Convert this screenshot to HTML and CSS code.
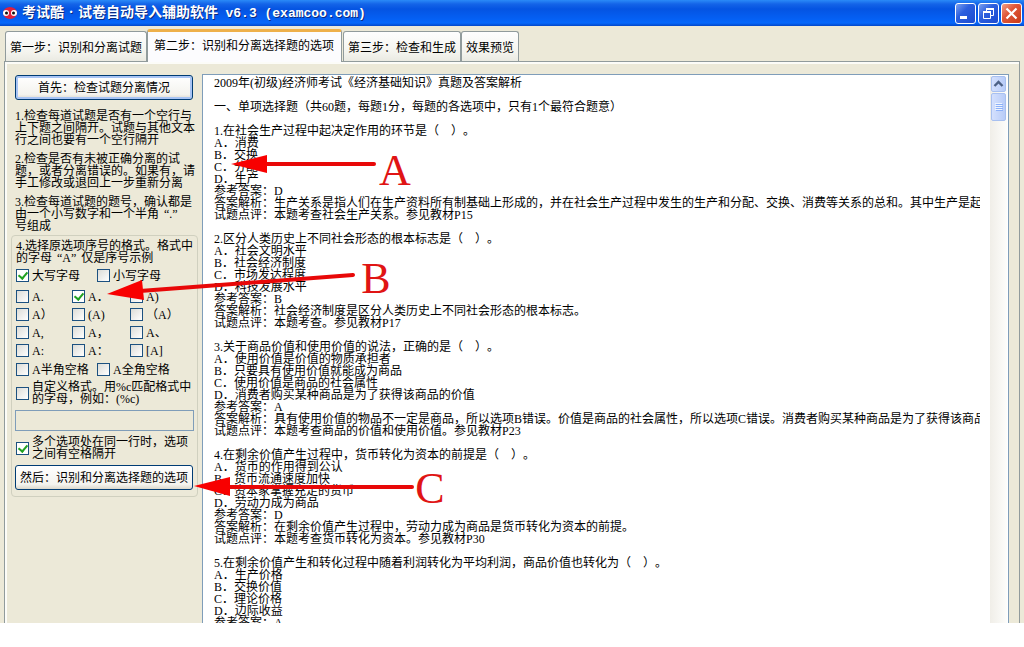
FILE: index.html
```html
<!DOCTYPE html>
<html lang="zh-CN">
<head>
<meta charset="utf-8">
<title>考试酷·试卷自动导入辅助软件</title>
<link rel="stylesheet" href="styles.css">
</head>
<body>
<div class="window">
  <header class="titlebar">
    <svg class="logo" width="16" height="16" viewBox="0 0 16 16" aria-hidden="true">
      <ellipse cx="8" cy="8" rx="7" ry="6" fill="#e0203c"/>
      <circle cx="4" cy="8" r="3" fill="#fff"/><circle cx="12" cy="8" r="3" fill="#fff"/>
      <circle cx="4.500" cy="8" r="1.500" fill="#111"/><circle cx="11.500" cy="8" r="1.500" fill="#111"/>
    </svg>
    <h1 class="title">考试酷<span class="title-dot">·</span>试卷自动导入辅助软件 <span class="title-latin">v6.3 (examcoo.com)</span></h1>
    <div class="window-buttons">
      <button class="win-btn" type="button" aria-label="最小化"><svg width="19" height="19" viewBox="0 0 19 19"><path d="M4 12h7v3H4z" fill="#fff"/></svg></button>
      <button class="win-btn" type="button" aria-label="还原"><svg width="19" height="19" viewBox="0 0 19 19"><path d="M7.500 7V4.500h7v7H12M4.500 7.500h7v7h-7z" fill="none" stroke="#fff"/><path d="M7 4h8v2H7zM4 7h8v2H4z" fill="#fff"/></svg></button>
      <button class="win-btn win-close" type="button" aria-label="关闭"><svg width="19" height="19" viewBox="0 0 19 19"><path d="M4.500 4.500l10 10M14.500 4.500l-10 10" stroke="#fff" stroke-width="2.200"/></svg></button>
    </div>
  </header>

  <nav class="tabs" role="tablist">
    <button class="tab" role="tab" type="button">第一步：识别和分离试题</button>
    <button class="tab tab-active" role="tab" type="button" aria-selected="true">第二步：识别和分离选择题的选项</button>
    <button class="tab tab-spaced" role="tab" type="button">第三步：检查和生成</button>
    <button class="tab" role="tab" type="button">效果预览</button>
  </nav>

  <main class="panel">
    <aside class="sidebar">
      <button class="push push-default" type="button">首先：检查试题分离情况</button>
      <div class="notes">
        <p>1.检查每道试题是否有一个空行与<br>上下题之间隔开。试题与其他文本<br>行之间也要有一个空行隔开</p>
        <p>2.检查是否有未被正确分离的试<br>题，或者分离错误的。如果有，请<br>手工修改或退回上一步重新分离</p>
        <p>3.检查每道试题的题号，确认都是<br>由一个小写数字和一个半角<span class="quoted">“.”</span><br>号组成</p>
      </div>
      <section class="group">
        <p>4.选择原选项序号的格式。格式中<br>的字母<span class="quoted">“A”</span>仅是序号示例</p>
        <div class="pair">
          <label class="check"><input type="checkbox" checked>大写字母</label>
          <label class="check"><input type="checkbox">小写字母</label>
        </div>
        <div class="formats">
          <label class="check"><input type="checkbox">A.</label>
          <label class="check"><input type="checkbox" checked>A．</label>
          <label class="check"><input type="checkbox">A)</label>
          <label class="check"><input type="checkbox">A）</label>
          <label class="check"><input type="checkbox">(A)</label>
          <label class="check"><input type="checkbox">（A）</label>
          <label class="check"><input type="checkbox">A,</label>
          <label class="check"><input type="checkbox">A，</label>
          <label class="check"><input type="checkbox">A、</label>
          <label class="check"><input type="checkbox">A:</label>
          <label class="check"><input type="checkbox">A：</label>
          <label class="check"><input type="checkbox">[A]</label>
        </div>
        <div class="pair">
          <label class="check"><input type="checkbox">A半角空格</label>
          <label class="check"><input type="checkbox">A全角空格</label>
        </div>
        <label class="check check-tall"><input type="checkbox"><span>自定义格式。用%c匹配格式中<br>的字母，例如：(%c)</span></label>
        <input class="custom" type="text" aria-label="自定义格式">
        <label class="check check-tall"><input type="checkbox" checked><span>多个选项处在同一行时，选项<br>之间有空格隔开</span></label>
        <button class="push" type="button">然后：识别和分离选择题的选项</button>
      </section>
    </aside>

    <div class="editor">
      <textarea class="document" aria-label="试卷内容" wrap="off" spellcheck="false">2009年(初级)经济师考试《经济基础知识》真题及答案解析

一、单项选择题（共60题，每题1分，每题的各选项中，只有1个最符合题意）

1.在社会生产过程中起决定作用的环节是（　）。
A．消费
B．交换
C．分配
D．生产
参考答案：D
答案解析：生产关系是指人们在生产资料所有制基础上形成的，并在社会生产过程中发生的生产和分配、交换、消费等关系的总和。其中生产是起决定作用的环节。
试题点评：本题考查社会生产关系。参见教材P15

2.区分人类历史上不同社会形态的根本标志是（　）。
A．社会文明水平
B．社会经济制度
C．市场发达程度
D．科技发展水平
参考答案：B
答案解析：社会经济制度是区分人类历史上不同社会形态的根本标志。
试题点评：本题考查。参见教材P17

3.关于商品价值和使用价值的说法，正确的是（　）。
A．使用价值是价值的物质承担者
B．只要具有使用价值就能成为商品
C．使用价值是商品的社会属性
D．消费者购买某种商品是为了获得该商品的价值
参考答案：A
答案解析：具有使用价值的物品不一定是商品，所以选项B错误。价值是商品的社会属性，所以选项C错误。消费者购买某种商品是为了获得该商品的使用价值。
试题点评：本题考查商品的价值和使用价值。参见教材P23

4.在剩余价值产生过程中，货币转化为资本的前提是（　）。
A．货币的作用得到公认
B．货币流通速度加快
C．资本家掌握充足的货币
D．劳动力成为商品
参考答案：D
答案解析：在剩余价值产生过程中，劳动力成为商品是货币转化为资本的前提。
试题点评：本题考查货币转化为资本。参见教材P30

5.在剩余价值产生和转化过程中随着利润转化为平均利润，商品价值也转化为（　）。
A．生产价格
B．交换价值
C．理论价格
D．边际收益
参考答案：A</textarea>
      <div class="scrollbar">
        <button class="scroll-up" type="button" aria-label="向上滚动"><svg width="13" height="14" viewBox="0 0 13 14"><path d="M2.500 9l4-4 4 4" fill="none" stroke="#4d6185" stroke-width="2.400"/></svg></button>
        <div class="thumb"><svg width="8" height="8" viewBox="0 0 8 8"><path d="M0 .5h7M0 2.500h7M0 4.500h7M0 6.500h7" stroke="#eef4fe"/><path d="M1 1.500h7M1 3.500h7M1 5.500h7M1 7.500h7" stroke="#8cb0f8"/></svg></div>
      </div>
    </div>
  </main>

  <svg class="callouts" width="450" height="520" viewBox="0 0 450 520">
    <g class="arrow">
      <path d="M260 164H374"/><path class="head" d="M231 164l36-9v18z"/>
      <path d="M140 291L353 275"/><path class="head" d="M107 294l35-14 2 20z"/>
      <path d="M225 487H412"/><path class="head" d="M194 486l36-9v19z"/>
    </g>
    <g class="letters">
      <text x="395" y="185">A</text>
      <text x="376" y="293">B</text>
      <text x="430" y="503">C</text>
    </g>
  </svg>
</div>
</body>
</html>
```

FILE: styles.css
```css
* { box-sizing: border-box; }

body {
  margin: 0;
  height: 100vh;
  padding-bottom: 24px;
  background: #fff;
  color: #000;
  font: 12px/12px "Liberation Serif", "Noto Sans CJK SC", sans-serif;
  text-spacing-trim: space-all;
}

button, input, textarea { font: inherit; color: inherit; text-spacing-trim: inherit; }
button { padding: 0; white-space: nowrap; }
p { margin: 0; white-space: nowrap; }
svg { display: block; }

.quoted { margin: 0 5px; }

.window {
  position: relative;
  display: flex;
  flex-direction: column;
  height: 100%;
  overflow: hidden;
  background: #ece9d8;
}

/* Title bar */
.titlebar {
  display: flex;
  flex: none;
  align-items: center;
  gap: 4px;
  height: 26px;
  padding: 0 2px;
  background: linear-gradient(#2a8af8 0, #1464e8 4px, #0554e2 9px, #0560f4 19px, #0668fb 23px, #0347c8 26px);
}
.title {
  flex: 1;
  margin: 0;
  color: #fff;
  font-size: 14px;
  line-height: 20px;
  font-weight: bold;
  white-space: nowrap;
  text-shadow: 1px 1px 0 #0a2a80;
}
.title-dot { display: inline-block; width: 14px; text-align: center; }
.title-latin { font-family: "Liberation Mono", monospace; font-size: 13px; margin-left: 4px; }
.window-buttons { display: flex; gap: 2px; }
.win-btn {
  width: 21px;
  height: 21px;
  border: 1px solid #fff;
  border-radius: 3px;
  background: linear-gradient(135deg, #7ba0f0, #2c5fde 40%, #1c4bd0);
}
.win-close { background: linear-gradient(135deg, #f0a088, #e0583a 40%, #c83a18); }

/* Tabs */
.tabs {
  display: flex;
  flex: none;
  align-items: flex-end;
  height: 35px;
  padding: 0 5px;
}
.tab {
  height: 30px;
  padding: 2px 4px 0;
  border: 1px solid #919b9c;
  border-bottom: 0;
  border-radius: 3px 3px 0 0;
  background: linear-gradient(#fefefe, #f4f4ee 70%, #eaeae2);
}
.tab-active {
  position: relative;
  z-index: 1;
  height: 33px;
  margin-bottom: -1px;
  padding: 0 7px 3px 6px;
  border-top: 3px solid #eeb04a;
  background: #fcfcfe;
}
.tab-spaced { margin-left: 1px; }

/* Panel */
.panel {
  display: flex;
  flex: 1;
  gap: 4px;
  min-height: 0;
  margin: 0 4px 0 4px;
  padding: 10px 10px 0 4px;
  border: 1px solid #919b9c;
  border-width: 1px 1px 0;
  box-shadow: inset 2px 2px 0 #fcfcf8;
}
.sidebar { flex: none; width: 189px; padding: 3px 0 0 2px; }
.push {
  display: block;
  width: 178px;
  height: 25px;
  border: 1px solid #003c74;
  border-radius: 3px;
  background: linear-gradient(#fff, #f4f3ee 80%, #dcd8cc);
}
.push-default {
  margin-left: 4px;
  box-shadow: inset 0 0 0 2px #a8c4f4;
}
.notes {
  display: grid;
  gap: 7px;
  padding: 10px 4px 3px;
}

/* Option group */
.group {
  display: grid;
  gap: 5px;
  padding: 4px 4px 6px;
  border: 1px solid #d0d0bf;
  border-radius: 4px;
}
.group .push { margin-left: -1px; }
.pair { display: grid; grid-template-columns: 81px 1fr; }
.formats {
  display: grid;
  grid-template-columns: 56px 58px 1fr;
  row-gap: 5px;
  margin: 3px 0 1px;
}
.check { display: flex; align-items: center; gap: 3px; height: 13px; white-space: nowrap; }
.check-tall { height: 24px; }
.check input {
  flex: none;
  width: 13px;
  height: 13px;
  margin: 0;
  appearance: none;
  border: 1px solid #1c5180;
  background: linear-gradient(135deg, #dcdcd7, #fff);
}
.check input:checked {
  background: #fff;
}
.check input:checked::before {
  content: "";
  display: block;
  width: 4px;
  height: 7px;
  margin: 0 0 0 3px;
  border: solid #21a121;
  border-width: 0 2px 2px 0;
  transform: rotate(40deg);
}
.custom {
  width: 179px;
  height: 21px;
  margin: 0 0 0 -1px;
  border: 1px solid #7f9db9;
  background: #ece9d8;
}

/* Document */
.editor {
  display: flex;
  flex: 1;
  min-width: 0;
  margin-top: 2px;
  padding: 1px 1px 0 11px;
  border: 1px solid #7f9db9;
  border-bottom: 0;
  background: #fff;
}
.document {
  flex: 1;
  min-width: 0;
  margin: 0 10px 0 0;
  padding: 1px 0 0;
  border: 0;
  outline: 0;
  resize: none;
  overflow: hidden;
  background: #fff;
  white-space: pre;
}
.scrollbar {
  flex: none;
  width: 17px;
  padding: 0 1px;
  background: linear-gradient(90deg, #f0eee8, #fdfdfb);
}
.scroll-up, .thumb {
  display: flex;
  align-items: center;
  justify-content: center;
  width: 15px;
  border: 1px solid #a8c0f0;
  border-radius: 2px;
  background: linear-gradient(90deg, #d4e0fd, #b8ccf8);
}
.scroll-up { height: 16px; }
.thumb { height: 28px; margin-top: 1px; }

/* Annotations drawn over the window */
.callouts { position: absolute; top: 0; left: 0; z-index: 2; pointer-events: none; }
.arrow { fill: none; stroke: #e80808; stroke-width: 4; stroke-linecap: round; }
.arrow .head { fill: #f80000; stroke: none; }
.letters { fill: #e01414; font-size: 44px; text-anchor: middle; }
```
